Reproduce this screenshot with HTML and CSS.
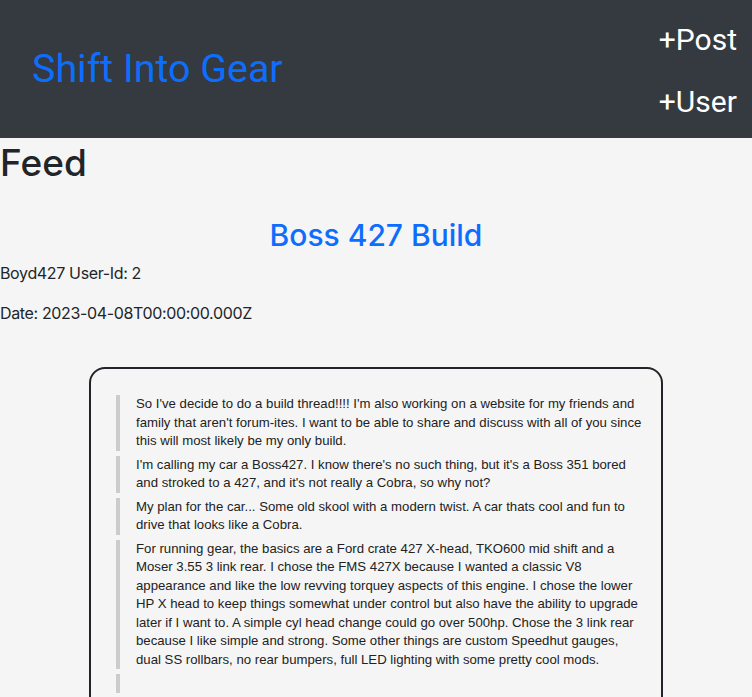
FILE: index.html
```html
<!DOCTYPE html>
<html lang="en">
<head>
<meta charset="utf-8">
<title>Shift Into Gear</title>
<link rel="stylesheet" href="styles.css">
</head>
<body>
<header class="topbar">
  <a class="brand" href="#">Shift Into Gear</a>
  <nav class="nav">
    <a class="nav-link" href="#">+Post</a>
    <a class="nav-link" href="#">+User</a>
  </nav>
</header>
<main class="feed">
  <h1 class="feed-title">Feed</h1>
  <section class="post">
    <h2 class="post-title">Boss 427 Build</h2>
    <p class="post-meta">Boyd427 User-Id: 2</p>
    <p class="post-meta">Date: 2023-04-08T00:00:00.000Z</p>
    <div class="post-card">
      <div class="post-body">
        <blockquote>So I've decide to do a build thread!!!! I'm also working on a website for my friends and family that aren't forum-ites. I want to be able to share and discuss with all of you since this will most likely be my only build.</blockquote>
        <blockquote>I'm calling my car a Boss427. I know there's no such thing, but it's a Boss 351 bored and stroked to a 427, and it's not really a Cobra, so why not?</blockquote>
        <blockquote>My plan for the car... Some old skool with a modern twist. A car thats cool and fun to drive that looks like a Cobra.</blockquote>
        <blockquote>For running gear, the basics are a Ford crate 427 X-head, TKO600 mid shift and a Moser 3.55 3 link rear. I chose the FMS 427X because I wanted a classic V8 appearance and like the low revving torquey aspects of this engine. I chose the lower HP X head to keep things somewhat under control but also have the ability to upgrade later if I want to. A simple cyl head change could go over 500hp. Chose the 3 link rear because I like simple and strong. Some other things are custom Speedhut gauges, dual&nbsp;SS rollbars, no rear bumpers, full LED lighting with some pretty cool mods.</blockquote>
        <blockquote><br></blockquote>
        <blockquote><br></blockquote>
      </div>
    </div>
  </section>
</main>
</body>
</html>
```

FILE: styles.css
```css
* { box-sizing: border-box; }

body {
  margin: 0;
  background: #f5f5f5;
  color: #212529;
  font-family: Inter, "Noto Sans", sans-serif;
  font-size: 16px;
  line-height: 1.5;
}

.topbar {
  display: flex;
  justify-content: space-between;
  align-items: center;
  background: #343a40;
  height: 138px;
  padding: 0 15px 0 32px;
}

.brand {
  font-family: Roboto, "Liberation Sans", sans-serif;
  font-size: 39.4px;
  color: #0d6efd;
  text-decoration: none;
  line-height: 1.2;
}

.nav {
  display: flex;
  flex-direction: column;
  margin-top: 4px;
}

.nav-link {
  font-family: Roboto, "Liberation Sans", sans-serif;
  font-size: 30px;
  line-height: 62px;
  color: #fff;
  text-decoration: none;
}

.feed-title {
  margin: 3px 0 0;
  font-size: 37px;
  font-weight: 500;
  line-height: 1.2;
}

.post-title {
  margin: 32px 0 8px;
  text-align: center;
  color: #0d6efd;
  font-size: 30px;
  font-weight: 500;
  line-height: 1.2;
}

.post-meta {
  margin: 0 0 16px;
  letter-spacing: -0.35px;
}

.post-card {
  width: 574px;
  margin: 42px auto 0;
  border: 2px solid #212529;
  border-radius: 16px;
  padding: 21px 14px 12px 25px;
}

.post-body {
  font-family: Helvetica, Arial, "Liberation Sans", sans-serif;
  font-size: 13.2px;
  line-height: 1.4;
  color: #222;
}

.post-body blockquote {
  margin: 5px 0;
  border-left: 4px solid #ccc;
  padding-left: 16px;
}
```
